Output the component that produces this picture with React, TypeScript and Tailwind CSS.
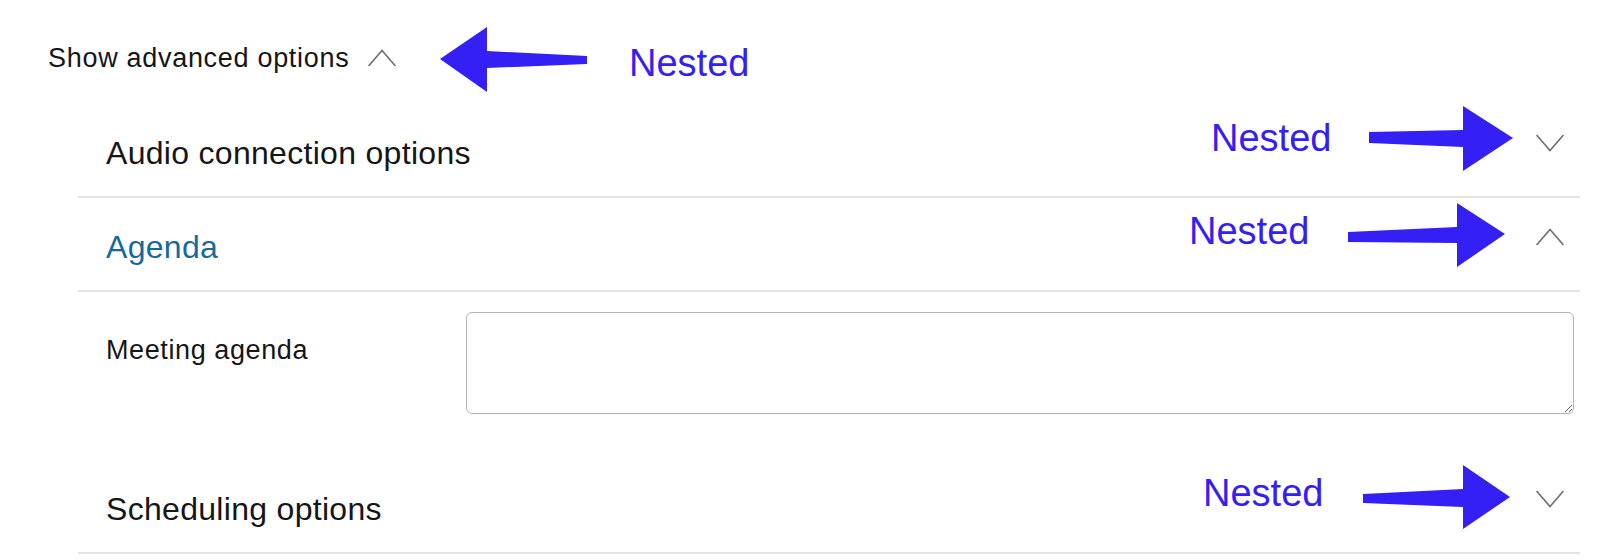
import React from "react";

const Chevron = ({ up, className = "" }: { up?: boolean; className?: string }) => (
  <svg width="28" height="18" viewBox="0 0 28 18" fill="none" className={className}>
    <polyline
      points={up ? "1,16.5 14,1.5 27,16.5" : "1,1.5 14,16.5 27,1.5"}
      stroke="#6e6e6e"
      strokeWidth="1.6"
      strokeLinecap="round"
      strokeLinejoin="miter"
    />
  </svg>
);

const Header = ({ title, open }: { title: string; open?: boolean }) => (
  <div className="flex h-[94px] items-center justify-between border-b-2 border-[#e4e4e4] pl-[28px] pr-[16px] pt-[6px]">
    <span
      className={`text-[32px] leading-[36px] tracking-[0.3px] ${open ? "text-[#17699a]" : "text-[#161616]"}`}
    >
      {title}
    </span>
    <Chevron up={open} className="mb-[20px]" />
  </div>
);

export default function App() {
  return (
    <div className="relative h-[560px] w-[1600px] overflow-hidden bg-white font-['Liberation_Sans',Arial,sans-serif] text-[#161616]">
      <div className="flex h-[104px] items-center gap-[19px] pl-[48px] pt-[12px]">
        <span className="text-[27px] leading-[30px] tracking-[0.7px]">Show advanced options</span>
        <Chevron up />
      </div>

      <div className="ml-[78px] w-[1502px]">
        <Header title="Audio connection options" />
        <Header title="Agenda" open />
        <div className="flex items-start pb-[46px] pl-[28px] pr-[6px] pt-[20px]">
          <div className="mt-[20px] w-[360px] shrink-0 text-[27px] leading-[36px] tracking-[0.6px]">
            Meeting agenda
          </div>
          <textarea className="h-[102px] flex-1 rounded-[6px] border border-[#b5b5b5] bg-white outline-none" />
        </div>
        <Header title="Scheduling options" />
      </div>

      <svg
        className="pointer-events-none absolute left-0 top-0"
        width="1600"
        height="560"
        viewBox="0 0 1600 560"
      >
        <g fill="#3420f5">
          <polygon points="440,59 487,27 487,51 587,56 587,64 487,68 487,92" />
          <polygon points="1513,138 1463,106 1463,130 1369,132 1369,143 1463,147 1463,171" />
          <polygon points="1505,234 1457,203 1457,227 1348,232 1348,242 1457,243 1457,267" />
          <polygon points="1510,497 1463,465 1463,489 1363,494 1363,503 1463,507 1463,529" />
        </g>
      </svg>

      <span className="absolute left-[629px] top-[44px] text-[38px] leading-[38px] text-[#3420f5]">
        Nested
      </span>
      <span className="absolute left-[1211px] top-[119px] text-[38px] leading-[38px] text-[#3420f5]">
        Nested
      </span>
      <span className="absolute left-[1189px] top-[212px] text-[38px] leading-[38px] text-[#3420f5]">
        Nested
      </span>
      <span className="absolute left-[1203px] top-[474px] text-[38px] leading-[38px] text-[#3420f5]">
        Nested
      </span>
    </div>
  );
}
